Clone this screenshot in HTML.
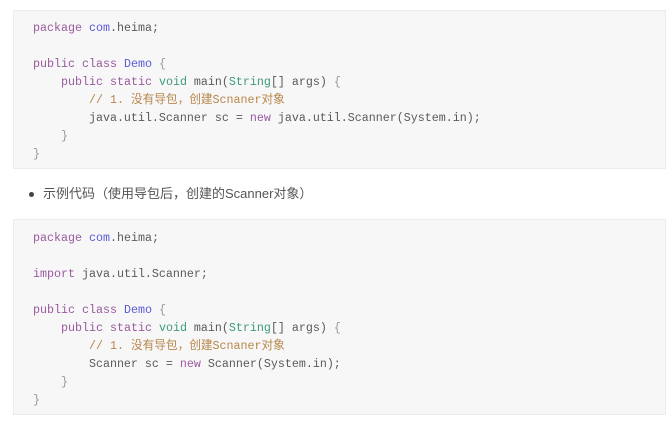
<!DOCTYPE html>
<html><head><meta charset="utf-8"><style>
body{margin:0;background:#fff;width:671px;height:423px;overflow:hidden;position:relative;font-family:"Liberation Mono","Noto Sans CJK SC",monospace;}
.box{position:absolute;left:13px;width:651px;background:#f7f7f7;border:1px solid #ececec;}
.l{position:absolute;left:19px;font-size:11.67px;line-height:18px;white-space:pre;color:#5a5a5a;}
.k{color:#9a5aa0}.d{color:#5a5ad8}.g{color:#3f9a78}.c{color:#b8864a}.b{color:#999}
.bul{position:absolute;left:29px;top:192px;width:5px;height:5px;border-radius:50%;background:#444}
.t{position:absolute;left:43px;top:185px;font-family:"Liberation Sans","Noto Sans CJK SC",sans-serif;font-size:13px;color:#555;line-height:18px}
</style></head><body>
<div class="box" style="top:10px;height:157px">
<div class="l" style="top:8px"><span class="k">package</span> <span class="d">com</span>.heima;</div>
<div class="l" style="top:44px"><span class="k">public</span> <span class="k">class</span> <span class="d">Demo</span> <span class="b">{</span></div>
<div class="l" style="top:62px">    <span class="k">public</span> <span class="k">static</span> <span class="g">void</span> main(<span class="g">String</span>[] args) <span class="b">{</span></div>
<div class="l" style="top:80px">        <span class="c">// 1. 没有导包，创建Scnaner对象</span></div>
<div class="l" style="top:98px">        java.util.Scanner sc = <span class="k">new</span> java.util.Scanner(System.in);</div>
<div class="l" style="top:116px">    <span class="b">}</span></div>
<div class="l" style="top:134px"><span class="b">}</span></div>
</div>
<div class="bul"></div>
<div class="t">示例代码（使用导包后，创建的Scanner对象）</div>
<div class="box" style="top:219px;height:194px">
<div class="l" style="top:9px"><span class="k">package</span> <span class="d">com</span>.heima;</div>
<div class="l" style="top:45px"><span class="k">import</span> java.util.Scanner;</div>
<div class="l" style="top:81px"><span class="k">public</span> <span class="k">class</span> <span class="d">Demo</span> <span class="b">{</span></div>
<div class="l" style="top:99px">    <span class="k">public</span> <span class="k">static</span> <span class="g">void</span> main(<span class="g">String</span>[] args) <span class="b">{</span></div>
<div class="l" style="top:117px">        <span class="c">// 1. 没有导包，创建Scnaner对象</span></div>
<div class="l" style="top:135px">        Scanner sc = <span class="k">new</span> Scanner(System.in);</div>
<div class="l" style="top:153px">    <span class="b">}</span></div>
<div class="l" style="top:171px"><span class="b">}</span></div>
</div>
</body></html>
